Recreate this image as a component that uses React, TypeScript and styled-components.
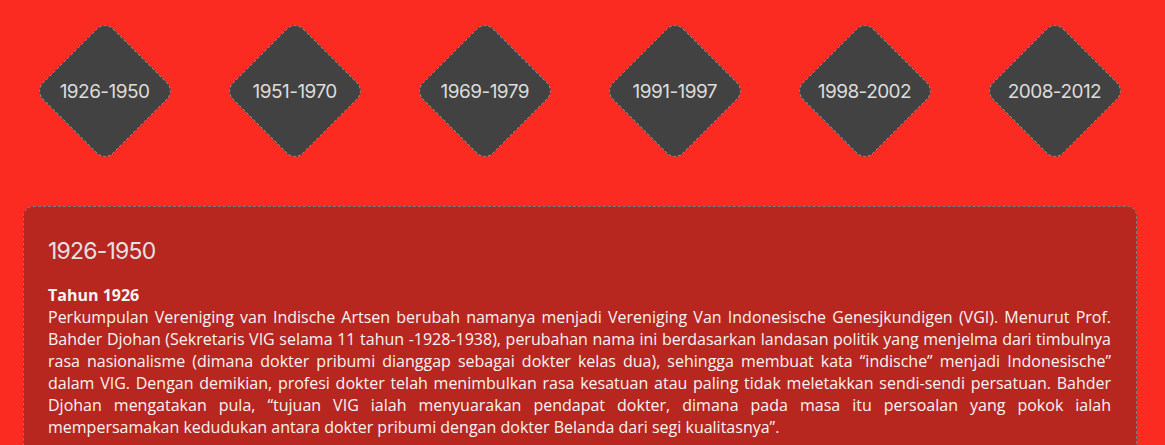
import React from "react";
import styled, { createGlobalStyle } from "styled-components";

const GlobalStyle = createGlobalStyle`
  html, body {
    margin: 0;
    padding: 0;
    background: #fc2b22;
  }
  body {
    font-family: "Open Sans", "Liberation Sans", sans-serif;
    overflow: hidden;
  }
`;

const Page = styled.div`
  display: flex;
  flex-direction: column;
  min-height: 445px;
`;

const Timeline = styled.nav`
  display: grid;
  grid-template-columns: repeat(6, 190px);
  padding: 41px 0 0 10px;
`;

const Slot = styled.div`
  display: flex;
  justify-content: center;
`;

const Diamond = styled.button<{ $active?: boolean }>`
  width: 100px;
  height: 100px;
  padding: 0;
  box-sizing: border-box;
  border: 1px dashed #8a8a8a;
  border-radius: 12px;
  background: #424242;
  transform: rotate(45deg);
  display: flex;
  align-items: center;
  justify-content: center;
  cursor: pointer;
`;

const DiamondLabel = styled.span`
  display: block;
  transform: rotate(-45deg);
  font-family: "Inter", "Liberation Sans", sans-serif;
  font-size: 19px;
  letter-spacing: -0.55px;
  color: #dcdcdc;
  white-space: nowrap;
`;

const Card = styled.section`
  margin: 65px 28px 0 23px;
  padding: 29px 25px 24px 24px;
  background: #b82620;
  border: 1px dashed #7b7b7b;
  border-radius: 10px;
`;

const CardTitle = styled.h2`
  margin: 0 0 18px;
  font-family: "Inter", "Liberation Sans", sans-serif;
  font-weight: 400;
  font-size: 23px;
  line-height: 30px;
  letter-spacing: -0.8px;
  color: #e2e2e2;
`;

const Body = styled.p`
  margin: 0;
  font-size: 16px;
  line-height: 22px;
  color: #f7f3f2;
  text-align: justify;
`;

const periods = [
  "1926-1950",
  "1951-1970",
  "1969-1979",
  "1991-1997",
  "1998-2002",
  "2008-2012",
];

export default function App() {
  return (
    <>
      <GlobalStyle />
      <Page>
        <Timeline>
          {periods.map((p, i) => (
            <Slot key={p}>
              <Diamond $active={i === 0}>
                <DiamondLabel>{p}</DiamondLabel>
              </Diamond>
            </Slot>
          ))}
        </Timeline>
        <Card>
          <CardTitle>1926-1950</CardTitle>
          <Body>
            <strong>Tahun 1926</strong>
            <br />
            Perkumpulan Vereniging van Indische Artsen berubah namanya menjadi
            Vereniging Van Indonesische Genesjkundigen (VGI). Menurut Prof.
            Bahder Djohan (Sekretaris VIG selama 11 tahun -1928-1938), perubahan
            nama ini berdasarkan landasan politik yang menjelma dari timbulnya
            rasa nasionalisme (dimana dokter pribumi dianggap sebagai dokter
            kelas dua), sehingga membuat kata “indische” menjadi Indonesische”
            dalam VIG. Dengan demikian, profesi dokter telah menimbulkan rasa
            kesatuan atau paling tidak meletakkan sendi-sendi persatuan. Bahder
            Djohan mengatakan pula, “tujuan VIG ialah menyuarakan pendapat
            dokter, dimana pada masa itu persoalan yang pokok ialah
            mempersamakan kedudukan antara dokter pribumi dengan dokter Belanda
            dari segi kualitasnya”.
          </Body>
        </Card>
      </Page>
    </>
  );
}
